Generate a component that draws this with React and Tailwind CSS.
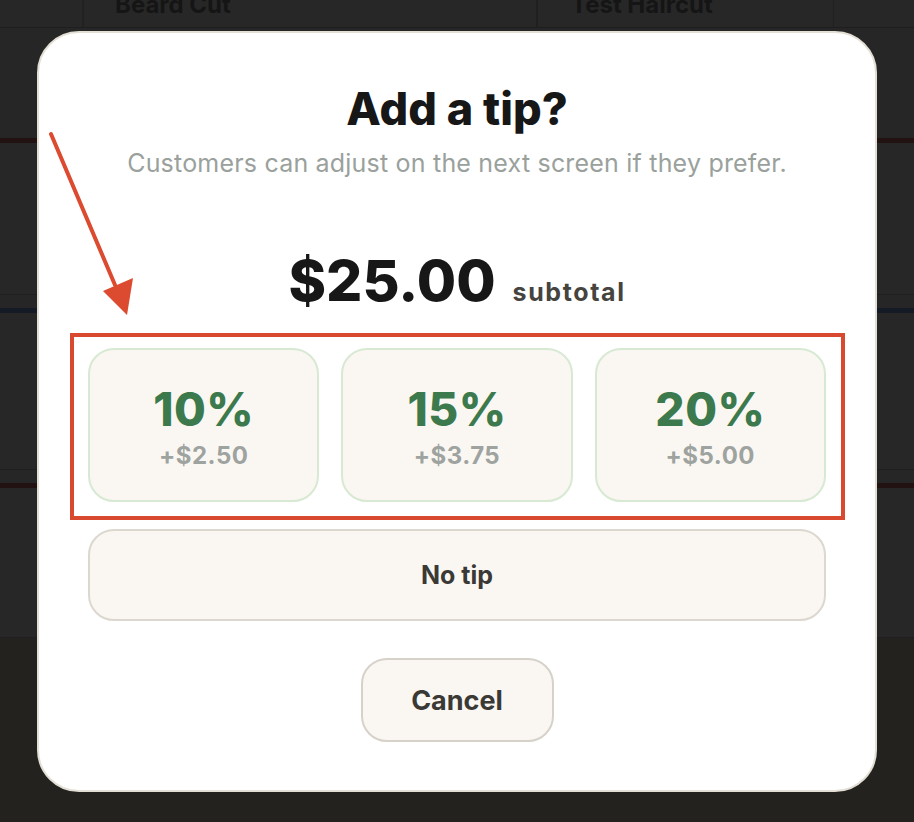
import React from 'react';

const tips = [
  { pct: '10%', amt: '+$2.50' },
  { pct: '15%', amt: '+$3.75' },
  { pct: '20%', amt: '+$5.00' },
];

const rows = [
  { bar: 'border-t-[#221212]', h: 'h-[157px]' },
  { bar: 'border-t-[#141a26]', h: 'h-[162px]' },
  { bar: 'border-t-[#221212]', h: 'h-[155px]' },
];

const App = () => {
  return (
    <div
      className="relative h-[822px] w-full overflow-hidden bg-[#262626]"
      style={{ fontFamily: 'Inter, "Noto Sans", sans-serif' }}
    >
      {/* page behind the dialog */}
      <div className="flex flex-col">
        <div className="flex h-[28px] border-b border-[#1e1e1e] bg-[#272727]">
          <div className="w-[83px] border-r border-[#222]" />
          <div className="-mt-[13px] w-[454px] border-x border-[#202020] px-[31px] text-[24px] font-bold text-[#151515]">
            Beard Cut
          </div>
          <div className="-mt-[13px] w-[297px] border-x border-[#202020] px-[33px] text-[24px] font-bold text-[#151515]">
            Test Haircut
          </div>
        </div>
        <div className="h-[110px]" />
        <div className="flex flex-col gap-[13px]">
          {rows.map((r, i) => (
            <div key={i} className={`${r.h} border-t-[5px] ${r.bar} border-b border-b-[#1f1f1f] bg-[#272727]`} />
          ))}
        </div>
        <div className="h-[200px] bg-[#23221f]" />
      </div>

      {/* dialog */}
      <div className="absolute inset-0 flex items-start justify-center pt-[31px]">
        <div className="relative flex h-[761px] w-[840px] flex-col items-center rounded-[42px] border-2 border-[#e4dfd5] bg-white px-[49px]">
          <h1 className="mt-[57px] text-[45px] font-extrabold leading-[38px] text-[#171717]">
            Add a tip?
          </h1>
          <p className="mt-[20px] text-[25px] leading-[30px] tracking-[0.2px] text-[#9aa19c]">
            Customers can adjust on the next screen if they prefer.
          </p>

          <div className="mt-[73px] flex items-baseline gap-[17px]">
            <span className="text-[57px] font-extrabold leading-[60px] text-[#171717]">$25.00</span>
            <span className="text-[25px] font-bold tracking-[1.6px] text-[#46443f]">subtotal</span>
          </div>

          <div className="relative mt-[36px] grid w-full grid-cols-3 gap-[22px]">
            {tips.map((t) => (
              <button
                key={t.pct}
                className="flex h-[154px] flex-col items-center justify-center rounded-[26px] border-2 border-[#d8e9d3] bg-[#faf7f3]"
              >
                <span className="mt-[6px] text-[46px] font-extrabold leading-[48px] tracking-[0.5px] text-[#3c7a4e]">{t.pct}</span>
                <span className="mt-[8px] text-[24px] font-bold leading-[30px] tracking-[0.5px] text-[#9ea39f]">{t.amt}</span>
              </button>
            ))}
            <div className="pointer-events-none absolute -top-[15px] -bottom-[18px] -left-[18px] -right-[19px] border-4 border-[#d8492f]" />
          </div>

          <button className="mt-[27px] flex h-[92px] w-full items-center justify-center rounded-[26px] border-2 border-[#dcd8cf] bg-[#faf7f3] pt-[3px] text-[25px] font-bold text-[#3a3935]">
            No tip
          </button>

          <button className="mt-[37px] flex h-[84px] w-[193px] items-center justify-center rounded-[26px] border-2 border-[#d6d2c9] bg-[#faf7f3] pt-[4px] text-[27px] font-bold text-[#3a3935]">
            Cancel
          </button>

          {/* annotation arrow */}
          <svg
            className="pointer-events-none absolute left-0 top-0"
            width="120"
            height="300"
            viewBox="0 0 120 300"
          >
            <line x1="12" y1="101" x2="76" y2="252" stroke="#dc4a2f" strokeWidth="4" strokeLinecap="round" />
            <polygon points="64,258 94,245 88,282" fill="#dc4a2f" />
          </svg>
        </div>
      </div>
    </div>
  );
};

export default App;
